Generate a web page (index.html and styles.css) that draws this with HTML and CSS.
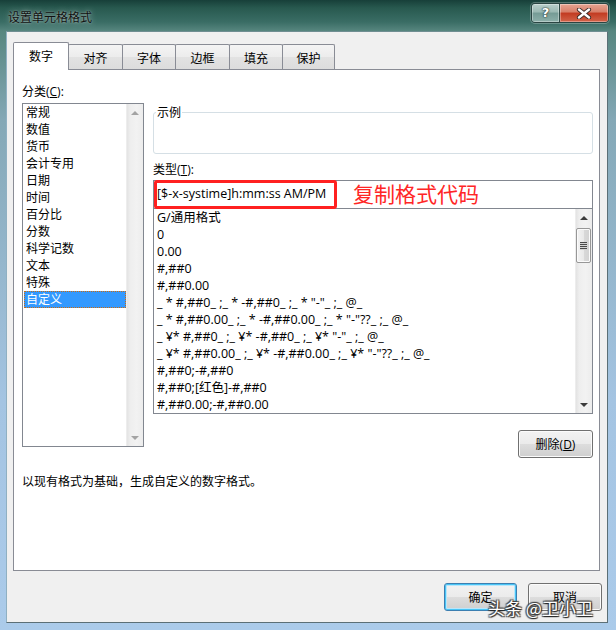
FILE: index.html
```html
<!DOCTYPE html>
<html lang="zh-CN">
<head>
<meta charset="utf-8">
<title>设置单元格格式</title>
<link rel="stylesheet" href="styles.css">
</head>
<body>
<div class="window">
  <div class="titlebar">
    <div class="title">设置单元格格式</div>
    <div class="caption-btns">
      <div class="cap help">?</div>
      <div class="cap close">
        <svg width="16" height="11" viewBox="0 0 16 11">
          <path d="M3 1.5 L13 9.5 M13 1.5 L3 9.5" stroke="#3a2a26" stroke-width="4.2" stroke-linecap="round" fill="none"/>
          <path d="M3 1.5 L13 9.5 M13 1.5 L3 9.5" stroke="#ffffff" stroke-width="2.4" stroke-linecap="round" fill="none"/>
        </svg>
      </div>
    </div>
  </div>

  <div class="client">
    <div class="tabs">
      <div class="tab active w56">数字</div>
      <div class="tab w55">对齐</div>
      <div class="tab w54">字体</div>
      <div class="tab w55">边框</div>
      <div class="tab w54">填充</div>
      <div class="tab w53">保护</div>
    </div>

    <div class="panel">
      <div class="cols">
        <div class="left">
          <div class="label">分类(<u>C</u>):</div>
          <div class="listbox cat">
            <ul class="items">
              <li>常规</li>
              <li>数值</li>
              <li>货币</li>
              <li>会计专用</li>
              <li>日期</li>
              <li>时间</li>
              <li>百分比</li>
              <li>分数</li>
              <li>科学记数</li>
              <li>文本</li>
              <li>特殊</li>
              <li class="selected">自定义</li>
            </ul>
            <div class="vscroll disabled">
              <div class="arrow"><span class="tri up"></span></div>
              <div class="track"></div>
              <div class="arrow"><span class="tri down"></span></div>
            </div>
          </div>
        </div>

        <div class="right">
          <fieldset class="sample">
            <legend>示例</legend>
            <div class="sample-body"></div>
          </fieldset>
          <div class="label type-label">类型(<u>T</u>):</div>
          <div class="type-input">
            <span class="type-text">[$-x-systime]h:mm:ss AM/PM</span>
            <div class="highlight"></div>
            <div class="note">复制格式代码</div>
          </div>
          <div class="listbox formats">
            <ul class="items">
              <li>G/通用格式</li>
              <li>0</li>
              <li>0.00</li>
              <li>#,##0</li>
              <li>#,##0.00</li>
              <li>_ * #,##0_ ;_ * -#,##0_ ;_ * "-"_ ;_ @_</li>
              <li>_ * #,##0.00_ ;_ * -#,##0.00_ ;_ * "-"??_ ;_ @_</li>
              <li>_ ¥* #,##0_ ;_ ¥* -#,##0_ ;_ ¥* "-"_ ;_ @_</li>
              <li>_ ¥* #,##0.00_ ;_ ¥* -#,##0.00_ ;_ ¥* "-"??_ ;_ @_</li>
              <li>#,##0;-#,##0</li>
              <li>#,##0;[红色]-#,##0</li>
              <li>#,##0.00;-#,##0.00</li>
            </ul>
            <div class="vscroll">
              <div class="arrow"><span class="tri up"></span></div>
              <div class="track"><div class="thumb"><span class="grip"></span></div></div>
              <div class="arrow"><span class="tri down"></span></div>
            </div>
          </div>
          <div class="del-row">
            <button class="btn del">删除(<u>D</u>)</button>
          </div>
        </div>
      </div>
      <div class="desc">以现有格式为基础，生成自定义的数字格式。</div>
    </div>

    <div class="footer">
      <button class="btn default ok">确定</button>
      <button class="btn cancel">取消</button>
    </div>
  </div>

  <div class="watermark">头条 @卫小卫</div>
</div>
</body>
</html>
```

FILE: styles.css
```css
* { box-sizing: border-box; }
html, body { margin: 0; padding: 0; }
body {
  width: 616px;
  height: 630px;
  overflow: hidden;
  font-family: "Open Sans", "Noto Sans CJK SC", sans-serif;
  font-size: 12px;
  line-height: 16px;
  color: #000;
}
u { text-decoration: underline; text-underline-offset: 1px; }

.window {
  position: relative;
  width: 616px;
  height: 630px;
  display: flex;
  flex-direction: column;
  background: linear-gradient(180deg, #173f39 0px, #28594f 8px, #3a6d65 22px, #57867f 31px, #84a8b6 120px, #a4c4e2 400px, #abcbea 630px);
}

/* title bar */
.titlebar {
  height: 31px;
  flex-shrink: 0;
  display: flex;
  justify-content: space-between;
  align-items: flex-start;
}
.title {
  padding: 10px 0 0 8px;
  color: #111;
  text-shadow: 0 0 6px rgba(255,255,255,0.55), 0 0 2px rgba(255,255,255,0.45);
}
.caption-btns {
  display: flex;
  margin: 3px 7px 0 0;
  height: 20px;
  border: 1px solid #2a4542;
  border-radius: 4px;
  overflow: hidden;
  box-shadow: 0 0 0 1px rgba(255,255,255,0.25);
}
.cap {
  height: 100%;
  display: flex;
  align-items: center;
  justify-content: center;
  box-shadow: inset 0 0 0 1px rgba(255,255,255,0.35);
}
.cap.help {
  width: 28px;
  border-right: 1px solid #2f4a47;
  background: linear-gradient(180deg, #b9cfcb 0%, #9ab8b2 45%, #759b95 50%, #8db0aa 100%);
  color: #fff;
  font-family: "DejaVu Sans", sans-serif;
  font-weight: bold;
  font-size: 13px;
  text-shadow: 0 0 2px #2b3d3b, 0 0 1px #2b3d3b, 0 0 1px #2b3d3b;
}
.cap.close {
  width: 48px;
  background: linear-gradient(180deg, #e6a592 0%, #d77e68 45%, #c23a21 50%, #d1644a 100%);
}

/* client */
.client {
  flex: 1;
  margin: 0 8px 7px 6px;
  background: #f0f0f0;
  border: 1px solid;
  border-color: #6f8e92 #5b6f76 #5b6f76 #8fb0c2;
  display: flex;
  flex-direction: column;
}

/* tabs */
.tabs {
  display: flex;
  align-items: flex-start;
  height: 28px;
  margin: 10px 0 -1px 6px;
  position: relative;
  z-index: 1;
}
.tab {
  height: 25px;
  margin-top: 2px;
  margin-left: -1px;
  border: 1px solid #898c95;
  border-bottom: none;
  border-radius: 2px 2px 0 0;
  background: linear-gradient(180deg, #f4f4f4 0%, #ececec 50%, #e2e2e2 51%, #dcdcdc 100%);
  text-align: center;
  padding-top: 5px;
  font-family: "Noto Sans CJK SC", sans-serif;
}
.tab.active {
  height: 28px;
  margin-top: 0;
  margin-left: 0;
  background: #fff;
  padding-top: 5px;
}
.w56 { width: 56px; }
.w55 { width: 55px; }
.w54 { width: 54px; }
.w53 { width: 53px; }

/* panel */
.panel {
  height: 502px;
  margin: 0 7px 0 6px;
  background: #fff;
  border: 1px solid #898c95;
  padding: 14px 6px 0 8px;
}
.cols { display: flex; align-items: flex-start; }
.left { width: 122px; }
.right { width: 440px; margin-left: 9px; }

.label { height: 16px; }
.left .label { margin-bottom: 3px; }

.listbox {
  display: flex;
  background: #fff;
  border: 1px solid #828790;
}
.listbox.cat { height: 344px; }
.listbox.formats { height: 206px; }

.items {
  list-style: none;
  margin: 0;
  padding: 0;
  flex: 1;
  min-width: 0;
}
.items li {
  height: 17px;
  line-height: 17px;
  white-space: pre;
}
.cat .items li {
  margin-left: 1px;
  padding-left: 2px;
}
.cat .items li.selected {
  background: #3399ff;
  color: #fff;
  outline: 1px dotted #cc6a10;
  outline-offset: -1px;
}
.formats .items li {
  padding-left: 3px;
  font-size: 12.5px;
}

/* scrollbars */
.vscroll {
  width: 17px;
  flex-shrink: 0;
  display: flex;
  flex-direction: column;
  background: linear-gradient(90deg, #e3e3e3 0%, #eeeeee 20%, #f2f2f2 60%, #ececec 100%);
  border-left: 1px solid #ededed;
}
.arrow {
  height: 17px;
  flex-shrink: 0;
  display: flex;
  align-items: center;
  justify-content: center;
}
.track { flex: 1; position: relative; }
.tri {
  width: 0;
  height: 0;
  border-left: 4px solid transparent;
  border-right: 4px solid transparent;
}
.tri.up { border-bottom: 4px solid #3c3c3c; }
.tri.down { border-top: 4px solid #3c3c3c; }
.disabled .tri.up { border-bottom-color: #a3a3a3; }
.disabled .tri.down { border-top-color: #a3a3a3; }

.thumb {
  margin: 2px 1px 0 0;
  height: 35px;
  border: 1px solid #979797;
  border-radius: 2px;
  background: linear-gradient(90deg, #f3f3f3 0%, #e9e9e9 50%, #d9d9d9 51%, #d2d2d2 100%);
  box-shadow: inset 0 0 0 1px #fbfbfb;
  display: flex;
  align-items: center;
  justify-content: center;
}
.grip {
  width: 7px;
  height: 8px;
  background: repeating-linear-gradient(180deg, #4a4a4a 0 1px, #d4d4d4 1px 2px);
}

/* sample group */
.sample {
  margin: 20px 0 0 0;
  padding: 0;
  border: 1px solid #d5dfe5;
  border-radius: 3px;
  min-width: 0;
}
.sample legend {
  margin-left: 2px;
  padding: 0 1px;
  line-height: 16px;
  font-family: "Noto Sans CJK SC", sans-serif;
}
.sample-body { height: 33px; }

.type-label { margin-top: 8px; }
.type-input {
  position: relative;
  margin-top: 2px;
  height: 28px;
  border: 1px solid #828790;
  border-bottom: none;
  background: #fff;
  padding-left: 3px;
  line-height: 26px;
}
.type-text { font-size: 12.5px; }
.highlight {
  position: absolute;
  left: 0;
  top: -1px;
  width: 183px;
  height: 29px;
  border: 3px solid #ff2020;
  border-radius: 3px;
}
.note {
  position: absolute;
  left: 199px;
  top: 0;
  font-family: "Noto Sans CJK SC", sans-serif;
  font-size: 21px;
  line-height: 25px;
  color: #ff2626;
  white-space: nowrap;
}

.del-row {
  display: flex;
  justify-content: flex-end;
  margin-top: 16px;
}

/* buttons */
.btn {
  height: 28px;
  padding: 0;
  font-family: "Open Sans", "Noto Sans CJK SC", sans-serif;
  font-size: 12px;
  color: #000;
  border: 1px solid #707070;
  border-radius: 3px;
  background: linear-gradient(180deg, #f2f2f2 0%, #ebebeb 50%, #dddddd 51%, #cfcfcf 100%);
  box-shadow: inset 0 0 0 1px #fbfbfb;
}
.btn.del { width: 75px; }
.btn.ok { width: 73px; }
.btn.cancel { width: 74px; }
.btn.default {
  border-color: #3c7fb1;
  box-shadow: inset 0 0 0 1px #48c4f5, inset 0 0 0 2px #b9e6fb;
}

.desc { margin-top: 16px; }

.footer {
  display: flex;
  justify-content: flex-end;
  gap: 11px;
  margin-top: 12px;
  padding-right: 5px;
}

/* watermark overlay */
.watermark {
  position: absolute;
  left: 488px;
  top: 597px;
  font-family: "Noto Sans CJK SC", sans-serif;
  font-size: 17px;
  line-height: 22px;
  color: #fff;
  white-space: nowrap;
  text-shadow: 1px 1px 1px #222, -1px -1px 1px #444, 1px -1px 1px #444, -1px 1px 1px #444;
}
```
